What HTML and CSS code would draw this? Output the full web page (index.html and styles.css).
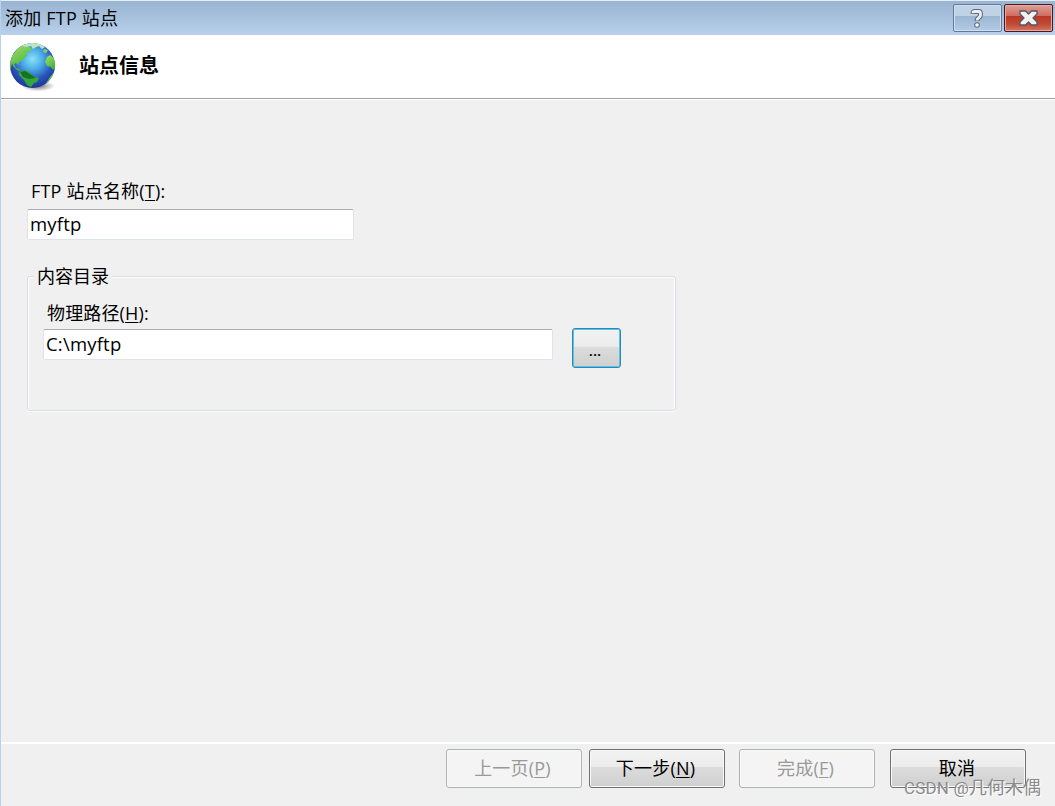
FILE: index.html
```html
<!DOCTYPE html>
<html lang="zh-CN">
<head>
<meta charset="utf-8">
<title>添加 FTP 站点</title>
<link rel="stylesheet" href="styles.css">
</head>
<body>
<main class="dialog">
  <header class="titlebar">
    <span class="title">添加 FTP 站点</span>
    <div class="controls">
      <button class="control help" aria-label="帮助">
        <svg width="47" height="26" viewBox="0 0 47 26"><path d="M19 9V7.500Q19 6.500 21 6.500H24.500Q26.500 6.500 26.500 8.500V10Q26.500 11.500 25 12.500Q23 13.800 23 16" fill="none" stroke="#5c6980" stroke-width="4.800"/><circle cx="23" cy="20" r="2.800" fill="#5c6980"/><path d="M19 8.300V7.500Q19 6.500 21 6.500H24.500Q26.500 6.500 26.500 8.500V10Q26.500 11.500 25 12.500Q23 13.800 23 15.500" fill="none" stroke="#eee" stroke-width="2.800"/><circle cx="23" cy="20" r="1.800" fill="#fff"/></svg>
      </button>
      <button class="control close" aria-label="关闭">
        <svg width="47" height="26" viewBox="0 0 47 26"><path d="M15 6H20.500L23.500 9L26.500 6H32V9L28 13L32 17V20H26.500L23.500 17L20.500 20H15V17L19 13L15 9Z" fill="#f2f2f2" stroke="#515668" stroke-width="1.300" stroke-linejoin="round"/></svg>
      </button>
    </div>
  </header>

  <section class="heading">
    <svg class="globe" width="50" height="52" viewBox="0 0 50 52">
      <defs>
        <radialGradient id="sea" cx=".5" cy=".36" r=".66"><stop offset="0" stop-color="#8ce0fa"/><stop offset=".33" stop-color="#4cb0e7"/><stop offset=".68" stop-color="#2854bd"/><stop offset="1" stop-color="#1d3190"/></radialGradient>
        <linearGradient id="land" x2=".5" y2="1"><stop stop-color="#a6df66"/><stop offset="1" stop-color="#43b33c"/></linearGradient>
        <radialGradient id="shade"><stop stop-color="#333" stop-opacity=".75"/><stop offset="1" stop-color="#555" stop-opacity="0"/></radialGradient>
        <clipPath id="sphere"><circle cx="24.500" cy="24.500" r="22.500"/></clipPath>
      </defs>
      <ellipse cx="30" cy="45" rx="17" ry="5.500" fill="url(#shade)"/>
      <circle cx="24.500" cy="24.500" r="22.500" fill="url(#sea)"/>
      <g clip-path="url(#sphere)">
        <path d="M1 26L4 15L10 7L15 4L22 6L24 9L21 11L19 10L18 13L20 15L17 16L15 19L11 21L10 24L8 22L6 23L8 27L11 28L13 30L9 29L5 25L4 22L2 30Z" fill="url(#land)"/>
        <path d="M14 5L19 2L31 2L37 6L34 8L31 5L28 6L25 8L23 5L18 6Z" fill="#bde5c0"/>
        <path d="M36 8L40 9L38 12L35 11Z" fill="#8dce67"/>
        <path d="M39 16L42 14L46 17L48 25L47 29L44 28L43 26L39 25L37 21Z" fill="url(#land)"/>
        <path d="M11 31L16 29L22 31L25 35L31 37L29 41L26 42L23 46L19 44L16 39L11 34Z" fill="#35a83d"/>
        <path d="M12 31L17 30L22 33L28 37L21 38L15 36Z" fill="#176f2b"/>
        <path d="M37 44L42 36L46 31L45 39Z" fill="#58cf43"/>
      </g>
    </svg>
    <h1>站点信息</h1>
  </section>

  <section class="content">
    <label class="name-label" for="site">FTP 站点名称(<u>T</u>):</label>
    <input class="field site-field" id="site" value="myftp">
    <fieldset class="group">
      <legend>内容目录</legend>
      <div class="path-row">
        <div class="path-block">
          <label class="path-label" for="path">物理路径(<u>H</u>):</label>
          <input class="field path-field" id="path" value="C:\myftp">
        </div>
        <button class="browse">...</button>
      </div>
    </fieldset>
  </section>

  <footer class="actions">
    <button class="action" disabled>上一页(<u>P</u>)</button>
    <button class="action next">下一步(<u>N</u>)</button>
    <button class="action finish" disabled>完成(<u>F</u>)</button>
    <button class="action cancel">取消</button>
  </footer>
  <div class="watermark"><span class="site-mark">CSDN @</span>几何木偶</div>
</main>
</body>
</html>
```

FILE: styles.css
```css
* { box-sizing: border-box; }
body { margin: 0; overflow: hidden; }
button, input { font: inherit; }
u { text-decoration-thickness: 1px; text-underline-offset: 2px; }
.dialog {
  position: relative;
  display: flex;
  flex-direction: column;
  width: 1055px;
  height: 806px;
  border-left: 1px solid #b9d1ef;
  background: #f0f0f0;
  color: #000;
  font: 18px/24px "Open Sans", "Noto Sans CJK SC", sans-serif;
}
.titlebar {
  display: flex;
  justify-content: space-between;
  height: 35px;
  padding: 0 2px 0 4px;
  border-top: 1px solid #e3edf7;
  background: linear-gradient(#99b4d1, #b8d0eb);
}
.title { padding-top: 5px; letter-spacing: .2px; }
.controls { display: flex; gap: 2px; padding-top: 3px; }
.control {
  display: flex;
  align-items: center;
  justify-content: center;
  width: 49px;
  height: 28px;
  padding: 0;
  border: 1px solid #65799a;
  border-radius: 2px;
}
.help { background: linear-gradient(#bfd2e6 0 42%, #9bb6d2 42%, #b3cbe4); box-shadow: inset 0 0 0 1px #cfdfef; }
.close { border-color: #4b1521; background: linear-gradient(#dba096, #cf6d60 42%, #b93625 42%, #c04c35 75%, #d47762); box-shadow: inset 0 0 0 1px #e5aaa0; }
.heading {
  display: flex;
  height: 64px;
  padding-left: 7px;
  border-bottom: 1px solid #a0a0a0;
  background: #fff;
}
.globe { margin-top: 6px; }
h1 { margin: 19px 0 0 21px; font-size: 20px; line-height: 24px; font-weight: 700; }
.content {
  display: flex;
  flex: 1;
  flex-direction: column;
  align-items: flex-start;
  padding: 80px 0 0 26px;
  border-top: 1px solid #fff;
}
.name-label { margin-left: 4px; line-height: 22px; letter-spacing: .2px; }
.field {
  height: 31px;
  padding: 0 2px 3px;
  border: 1px solid #dfe4eb;
  border-top-color: #abadb3;
  border-radius: 2px;
  background: #fff;
  color: #000;
  font-size: 18.5px;
  letter-spacing: .2px;
  outline: 0;
}
.site-field { width: 327px; margin-top: 7px; }
.group {
  width: 649px;
  height: 147px;
  min-width: 0;
  margin: 24px 0 0;
  padding: 0 15px;
  border: 1px solid #d5dfe5;
  border-radius: 3px;
  box-shadow: 0 1px 0 #fff, inset 1px 1px 0 #fff, inset -1px 0 0 #fff;
}
legend { height: 24px; margin-left: -9px; padding: 0 3px; background: #f0f0f0; }
.path-row { display: flex; gap: 19px; padding-top: 14px; }
.path-block { display: flex; flex-direction: column; width: 510px; }
.path-label { margin-left: 4px; line-height: 22px; letter-spacing: .15px; }
.path-field { width: 510px; margin-top: 5px; }
.browse {
  width: 49px;
  height: 40px;
  margin-top: 26px;
  padding: 3px 3px 0 0;
  border: 1px solid #3c7fb1;
  border-radius: 3px;
  background: linear-gradient(#f2f2f2, #ebebeb 47%, #dcdcdc 47%, #cfcfcf);
  box-shadow: inset 0 0 0 1px #48cbed;
  color: #000;
  font-size: 15px;
  font-weight: 600;
}
.actions {
  display: flex;
  height: 64px;
  padding: 5px 0 0 445px;
  border-top: 2px solid #fff;
}
.action {
  width: 136px;
  height: 39px;
  padding: 0 3px 1px 0;
  border: 1px solid #707070;
  border-radius: 3px;
  background: linear-gradient(#f2f2f2, #ebebeb 47%, #dcdcdc 47%, #cfcfcf);
  box-shadow: inset 0 0 0 1px #f9f9f9;
  color: #000;
  letter-spacing: .2px;
}
.action:disabled { border-color: #adb2b5; background: #f4f4f4; color: #999; }
.next { margin-left: 7px; }
.finish { margin-left: 14px; }
.cancel { margin-left: 15px; padding-right: 2px; }
.watermark {
  position: absolute;
  right: 14px;
  bottom: 6px;
  color: #8b8b8b;
  font: 18px/24px "Noto Sans CJK SC", sans-serif;
  text-shadow: 1px 1px 0 #fff;
  white-space: nowrap;
}
.site-mark { font-family: Roboto, sans-serif; font-size: 17px; letter-spacing: .2px; }
```
